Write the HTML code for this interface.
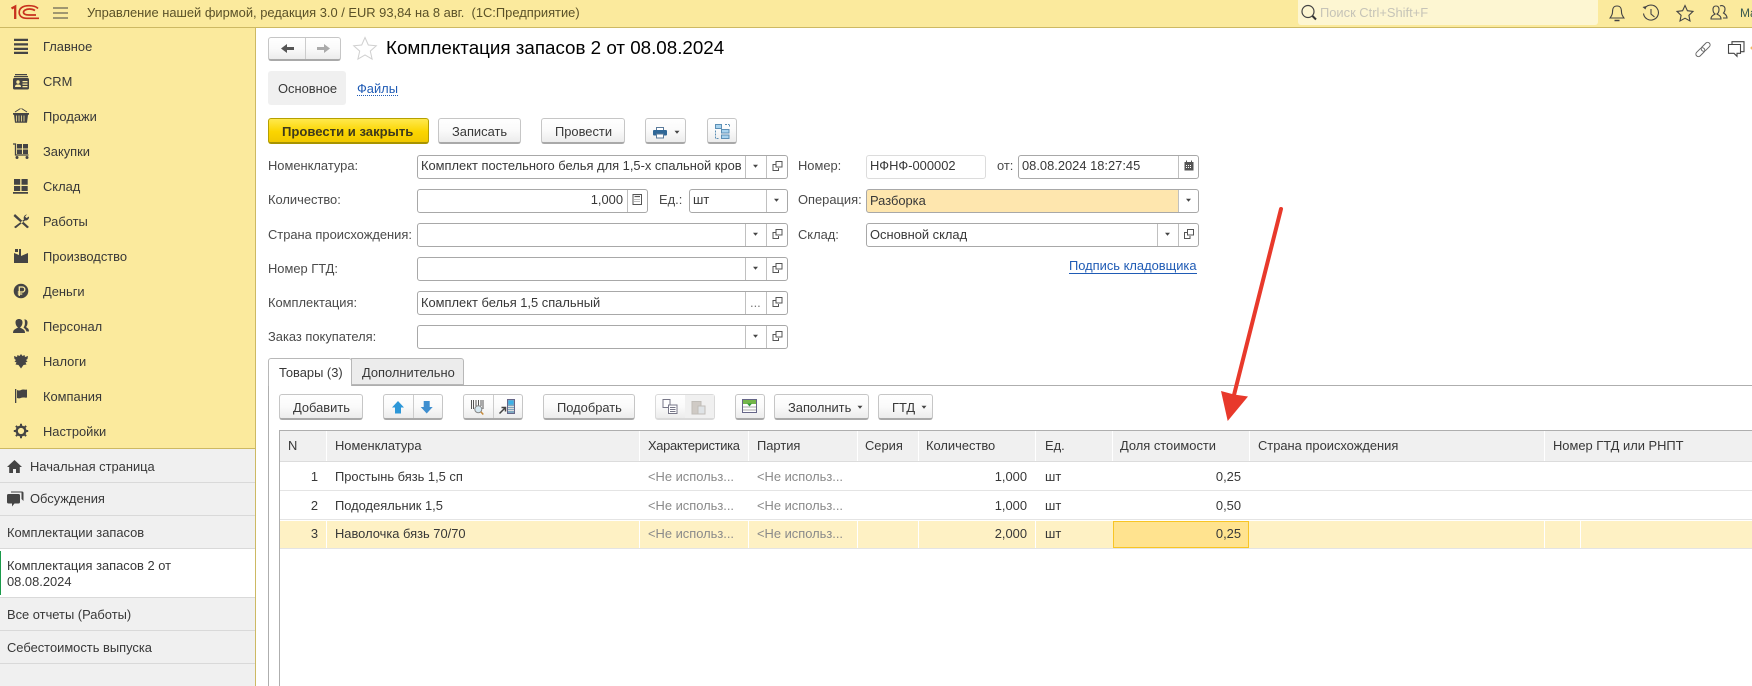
<!DOCTYPE html>
<html lang="ru"><head><meta charset="utf-8"><title>Комплектация запасов 2 от 08.08.2024</title>
<style>
html,body{margin:0;padding:0;background:#fff}
body{position:relative;width:1752px;height:686px;overflow:hidden;font-family:"Liberation Sans","Noto Sans CJK SC",sans-serif;font-size:12.9px;color:#383838}
div{box-sizing:border-box}
.r{position:absolute}
.t{position:absolute;white-space:nowrap;line-height:16px;height:16px}
.e{text-align:right}
.b{position:absolute;height:26px;background:linear-gradient(#fff,#fafafa 50%,#ececec);border:1px solid #c6c6c6;border-bottom:2px solid #a9a9a9;border-radius:3px}
.f{position:absolute;height:24px;border:1px solid #a8a8a8;border-radius:3px;background:#fff}
.d{position:absolute;width:1px;background:#c0c0c0}
.l{color:#4a4a4a}
.g{color:#8a8a8a}
</style></head><body>
<div class="r" style="left:0;top:0;width:1752px;height:28px;background:#fbea9d;border-bottom:1px solid #cdb963"></div>
<div class="t" style="left:87px;top:5px;color:#5a5128">Управление нашей фирмой, редакция 3.0 / EUR 93,84 на 8 авг.&nbsp; (1С:Предприятие)</div>
<div class="r" style="left:1298px;top:0;width:300px;height:25px;background:#fdf6d2;border-radius:0 0 3px 3px"></div>
<div class="t" style="left:1320px;top:5px;color:#c6c4b8">Поиск Ctrl+Shift+F</div>
<div class="t" style="left:1740px;top:5px;color:#3a5a50;font-size:12px">Ma</div>

<div class="r" style="left:0;top:28px;width:256px;height:658px;background:#f0f0f0;border-right:1px solid #cdb963"></div>
<div class="r" style="left:0;top:28px;width:255px;height:421px;background:#fbea9d;border-bottom:1px solid #cdb963"></div>
<div class="t" style="left:43px;top:39px">Главное</div>
<div class="t" style="left:43px;top:74px">CRM</div>
<div class="t" style="left:43px;top:109px">Продажи</div>
<div class="t" style="left:43px;top:144px">Закупки</div>
<div class="t" style="left:43px;top:179px">Склад</div>
<div class="t" style="left:43px;top:214px">Работы</div>
<div class="t" style="left:43px;top:249px">Производство</div>
<div class="t" style="left:43px;top:284px">Деньги</div>
<div class="t" style="left:43px;top:319px">Персонал</div>
<div class="t" style="left:43px;top:354px">Налоги</div>
<div class="t" style="left:43px;top:389px">Компания</div>
<div class="t" style="left:43px;top:424px">Настройки</div>

<div class="r" style="left:0;top:482px;width:255px;height:1px;background:#d9d9d9"></div>
<div class="r" style="left:0;top:515px;width:255px;height:1px;background:#d9d9d9"></div>
<div class="r" style="left:0;top:548px;width:255px;height:50px;background:#fff;border-top:1px solid #d9d9d9;border-bottom:1px solid #d9d9d9"></div>
<div class="r" style="left:0;top:551px;width:1px;height:44px;background:#1a9a4a"></div>
<div class="r" style="left:0;top:630px;width:255px;height:1px;background:#d9d9d9"></div>
<div class="r" style="left:0;top:663px;width:255px;height:1px;background:#d9d9d9"></div>
<div class="t" style="left:30px;top:459px">Начальная страница</div>
<div class="t" style="left:30px;top:491px">Обсуждения</div>
<div class="t" style="left:7px;top:525px">Комплектации запасов</div>
<div class="t" style="left:7px;top:558px">Комплектация запасов 2 от</div>
<div class="t" style="left:7px;top:574px">08.08.2024</div>
<div class="t" style="left:7px;top:607px">Все отчеты (Работы)</div>
<div class="t" style="left:7px;top:640px">Себестоимость выпуска</div>

<div class="b" style="left:268px;top:37px;width:73px;height:24px"></div>
<div class="d" style="left:305px;top:38px;height:21px;background:#ccc"></div>
<div class="t" style="left:386px;top:38px;font-size:18.8px;line-height:20px;height:20px;color:#000">Комплектация запасов 2 от 08.08.2024</div>

<div class="r" style="left:268px;top:71px;width:78px;height:34px;background:#f0f0f0;border-radius:3px"></div>
<div class="t" style="left:278px;top:81px">Основное</div>
<div class="t" style="left:357px;top:81px;color:#1f5bb5;border-bottom:1px dotted #1f5bb5;height:15px">Файлы</div>

<div class="r" style="left:268px;top:118px;width:161px;height:26px;border:1px solid #b5a000;border-bottom:2px solid #a89400;border-radius:3px;background:linear-gradient(#ffe94d,#fbd500 55%,#f1c800)"></div>
<div class="t" style="left:282px;top:124px;font-weight:bold;font-size:13.1px;color:#3e3a1c">Провести и закрыть</div>
<div class="b" style="left:438px;top:118px;width:83px"></div>
<div class="t" style="left:452px;top:124px">Записать</div>
<div class="b" style="left:541px;top:118px;width:84px"></div>
<div class="t" style="left:555px;top:124px">Провести</div>
<div class="b" style="left:645px;top:118px;width:41px"></div>
<div class="b" style="left:707px;top:118px;width:30px"></div>

<div class="t l" style="left:268px;top:158px">Номенклатура:</div>
<div class="t l" style="left:268px;top:192px">Количество:</div>
<div class="t l" style="left:268px;top:227px">Страна происхождения:</div>
<div class="t l" style="left:268px;top:261px">Номер ГТД:</div>
<div class="t l" style="left:268px;top:295px">Комплектация:</div>
<div class="t l" style="left:268px;top:329px">Заказ покупателя:</div>

<div class="f" style="left:417px;top:155px;width:371px"></div>
<div class="f" style="left:417px;top:189px;width:231px"></div>
<div class="f" style="left:689px;top:189px;width:99px"></div>
<div class="f" style="left:417px;top:223px;width:371px"></div>
<div class="f" style="left:417px;top:257px;width:371px"></div>
<div class="f" style="left:417px;top:291px;width:371px"></div>
<div class="f" style="left:417px;top:325px;width:371px"></div>
<div class="d" style="left:745px;top:156px;height:22px"></div><div class="d" style="left:766px;top:156px;height:22px"></div>
<div class="d" style="left:627px;top:190px;height:22px"></div><div class="d" style="left:766px;top:190px;height:22px"></div>
<div class="d" style="left:745px;top:224px;height:22px"></div><div class="d" style="left:766px;top:224px;height:22px"></div>
<div class="d" style="left:745px;top:258px;height:22px"></div><div class="d" style="left:766px;top:258px;height:22px"></div>
<div class="d" style="left:745px;top:292px;height:22px"></div><div class="d" style="left:766px;top:292px;height:22px"></div>
<div class="d" style="left:745px;top:326px;height:22px"></div><div class="d" style="left:766px;top:326px;height:22px"></div>
<div class="t" style="left:421px;top:158px;width:323px;overflow:hidden">Комплект постельного белья для 1,5-х спальной кров</div>
<div class="t e" style="left:560px;top:192px;width:63px">1,000</div>
<div class="t l" style="left:659px;top:192px">Ед.:</div>
<div class="t" style="left:693px;top:192px">шт</div>
<div class="t" style="left:421px;top:295px">Комплект белья 1,5 спальный</div>
<div class="t" style="left:750px;top:295px;color:#777">...</div>

<div class="t l" style="left:798px;top:158px">Номер:</div>
<div class="t l" style="left:798px;top:192px">Операция:</div>
<div class="t l" style="left:798px;top:227px">Склад:</div>
<div class="f" style="left:866px;top:155px;width:120px;border-color:#dcdcdc"></div>
<div class="t" style="left:870px;top:158px">НФНФ-000002</div>
<div class="t l" style="left:997px;top:158px">от:</div>
<div class="f" style="left:1018px;top:155px;width:181px"></div>
<div class="d" style="left:1178px;top:156px;height:22px"></div>
<div class="t" style="left:1022px;top:158px">08.08.2024 18:27:45</div>
<div class="f" style="left:866px;top:189px;width:333px;background:linear-gradient(to right,#fee6ae 312px,#fff 312px)"></div>
<div class="d" style="left:1178px;top:190px;height:22px"></div>
<div class="t" style="left:870px;top:193px">Разборка</div>
<div class="f" style="left:866px;top:223px;width:333px"></div>
<div class="d" style="left:1157px;top:224px;height:22px"></div><div class="d" style="left:1178px;top:224px;height:22px"></div>
<div class="t" style="left:870px;top:227px">Основной склад</div>
<div class="t" style="left:1069px;top:258px;color:#1f5bb5;border-bottom:1px solid #1f5bb5;height:16px">Подпись кладовщика</div>

<div class="r" style="left:268px;top:385px;width:1484px;height:301px;border-left:1px solid #aeaeae;border-top:1px solid #aeaeae"></div>
<div class="r" style="left:351px;top:358px;width:113px;height:27px;background:#ececec;border:1px solid #b8b8b8;border-radius:0 3px 0 0"></div>
<div class="r" style="left:268px;top:358px;width:84px;height:28px;background:#fff;border:1px solid #b8b8b8;border-bottom:0;border-radius:3px 3px 0 0"></div>
<div class="t" style="left:279px;top:365px">Товары (3)</div>
<div class="t" style="left:362px;top:365px">Дополнительно</div>

<div class="b" style="left:279px;top:394px;width:84px"></div><div class="t" style="left:293px;top:400px">Добавить</div>
<div class="b" style="left:383px;top:394px;width:60px"></div><div class="d" style="left:413px;top:395px;height:23px;background:#ccc"></div>
<div class="b" style="left:463px;top:394px;width:60px"></div><div class="d" style="left:493px;top:395px;height:23px;background:#ccc"></div>
<div class="b" style="left:543px;top:394px;width:92px"></div><div class="t" style="left:557px;top:400px">Подобрать</div>
<div class="b" style="left:655px;top:394px;width:60px;border-color:#dadada"></div><div class="r" style="left:685px;top:395px;width:29px;height:23px;background:#f0f0f0"></div>
<div class="b" style="left:735px;top:394px;width:30px"></div>
<div class="b" style="left:774px;top:394px;width:95px"></div><div class="t" style="left:788px;top:400px">Заполнить</div>
<div class="b" style="left:878px;top:394px;width:55px"></div><div class="t" style="left:892px;top:400px">ГТД</div>

<div class="r" style="left:279px;top:430px;width:1473px;height:256px;border-left:1px solid #aeaeae;border-top:1px solid #aeaeae"></div>
<div class="r" style="left:280px;top:431px;width:1472px;height:31px;background:#f0f0f0;border-bottom:1px solid #dcdcdc"></div>
<div class="r" style="left:280px;top:490px;width:1472px;height:1px;background:#e4e4e4"></div>
<div class="r" style="left:280px;top:519px;width:1472px;height:1px;background:#e4e4e4"></div>
<div class="r" style="left:280px;top:521px;width:1472px;height:27px;background:#fef1c4"></div>
<div class="r" style="left:280px;top:548px;width:1472px;height:1px;background:#e4e4e4"></div>
<div class="d" style="left:326px;top:431px;height:30px;background:#fff"></div>
<div class="d" style="left:639px;top:431px;height:30px;background:#fff"></div>
<div class="d" style="left:748px;top:431px;height:30px;background:#fff"></div>
<div class="d" style="left:857px;top:431px;height:30px;background:#fff"></div>
<div class="d" style="left:918px;top:431px;height:30px;background:#fff"></div>
<div class="d" style="left:1035px;top:431px;height:30px;background:#fff"></div>
<div class="d" style="left:1112px;top:431px;height:30px;background:#fff"></div>
<div class="d" style="left:1249px;top:431px;height:30px;background:#fff"></div>
<div class="d" style="left:1544px;top:431px;height:30px;background:#fff"></div>
<div class="d" style="left:326px;top:521px;height:27px;background:#fff"></div>
<div class="d" style="left:639px;top:521px;height:27px;background:#fff"></div>
<div class="d" style="left:748px;top:521px;height:27px;background:#fff"></div>
<div class="d" style="left:857px;top:521px;height:27px;background:#fff"></div>
<div class="d" style="left:918px;top:521px;height:27px;background:#fff"></div>
<div class="d" style="left:1035px;top:521px;height:27px;background:#fff"></div>
<div class="d" style="left:1544px;top:521px;height:27px;background:#fff"></div>
<div class="d" style="left:1580px;top:521px;height:27px;background:#fff"></div>
<div class="r" style="left:1113px;top:521px;width:136px;height:27px;background:#ffe38f;border:1px solid #f8c525"></div>

<div class="t" style="left:288px;top:438px">N</div>
<div class="t" style="left:335px;top:438px">Номенклатура</div>
<div class="t" style="left:648px;top:438px;letter-spacing:-.3px">Характеристика</div>
<div class="t" style="left:757px;top:438px">Партия</div>
<div class="t" style="left:865px;top:438px">Серия</div>
<div class="t" style="left:926px;top:438px">Количество</div>
<div class="t" style="left:1045px;top:438px">Ед.</div>
<div class="t" style="left:1120px;top:438px">Доля стоимости</div>
<div class="t" style="left:1258px;top:438px">Страна происхождения</div>
<div class="t" style="left:1553px;top:438px">Номер ГТД или РНПТ</div>

<div class="t e" style="left:290px;top:469px;width:28px">1</div>
<div class="t" style="left:335px;top:469px">Простынь бязь 1,5 сп</div>
<div class="t g" style="left:648px;top:469px">&lt;Не использ...</div>
<div class="t g" style="left:757px;top:469px">&lt;Не использ...</div>
<div class="t e" style="left:960px;top:469px;width:67px">1,000</div>
<div class="t" style="left:1045px;top:469px">шт</div>
<div class="t e" style="left:1180px;top:469px;width:61px">0,25</div>

<div class="t e" style="left:290px;top:498px;width:28px">2</div>
<div class="t" style="left:335px;top:498px">Пододеяльник 1,5</div>
<div class="t g" style="left:648px;top:498px">&lt;Не использ...</div>
<div class="t g" style="left:757px;top:498px">&lt;Не использ...</div>
<div class="t e" style="left:960px;top:498px;width:67px">1,000</div>
<div class="t" style="left:1045px;top:498px">шт</div>
<div class="t e" style="left:1180px;top:498px;width:61px">0,50</div>

<div class="t e" style="left:290px;top:526px;width:28px">3</div>
<div class="t" style="left:335px;top:526px">Наволочка бязь 70/70</div>
<div class="t g" style="left:648px;top:526px">&lt;Не использ...</div>
<div class="t g" style="left:757px;top:526px">&lt;Не использ...</div>
<div class="t e" style="left:960px;top:526px;width:67px">2,000</div>
<div class="t" style="left:1045px;top:526px">шт</div>
<div class="t e" style="left:1180px;top:526px;width:61px">0,25</div>

<svg class="r" style="left:0;top:0" width="1752" height="686" viewBox="0 0 1752 686" xmlns="http://www.w3.org/2000/svg">
<defs>
<path id="dd" d="M-2.500-1.300h5l-2.500 3z" fill="#444"/>
<g id="op" fill="none" stroke="#555" stroke-width="1"><path d="M-1.500-4.500h6v5.500h-6z"/><path d="M-1.500-1.500h-3v6h5.500v-2.500"/></g>
</defs>
<!-- top bar logo -->
<g fill="none" stroke="#c8321e">
<path d="M11.500 8.500L15.200 6.500V19" stroke-width="2.300"/>
<path d="M38 8.500C36 6.300 33 5.700 29 5.700C22.500 5.700 19.200 8.500 19.200 12.300C19.200 16.300 22.500 18.300 27 18.300H39" stroke-width="1.700"/>
<path d="M35 10.500C33.500 9.600 31.500 9 29.500 9C26 9 23.500 10.500 23.500 12.300C23.500 14.200 26 15 29 15H36" stroke-width="1.700"/>
</g>
<path d="M53 8h15M53 13h15M53 18h15" stroke="#444" stroke-width="1"/>
<!-- search and top icons -->
<circle cx="1308" cy="11.500" r="6" fill="none" stroke="#444" stroke-width="1.200"/><path d="M1312.500 16l3.500 3.500" stroke="#333" stroke-width="2"/>
<g fill="none" stroke="#444" stroke-width="1.100">
<path d="M1617 6c-4 0-4.500 3-4.500 6 0 3-1.500 4.500-2.500 6h14c-1-1.500-2.500-3-2.500-6 0-3-.5-6-4.500-6z"/><path d="M1614.500 20.500h5" stroke-width="1.500"/>
<path d="M1645 8a7.500 7.500 0 1 1-1.500 5.500"/><path d="M1651 9v5l3.500 3"/>
<path d="M1685 5.500l2.400 5.200 5.600.7-4.100 3.900 1.100 5.700-5-2.800-5 2.800 1.100-5.700-4.100-3.900 5.600-.7z"/>
<path d="M1711 19c0-3 2-3.500 4-5-1.500-1-2-3-2-4.500 0-2 1-3.500 3-3.500s3 1.500 3 3.500c0 1.500-.5 3.500-2 4.500 2 1.500 4 2 4 5z"/><path d="M1720 6c2-1 5 0 5 3 0 1.500-.5 3-1.500 4 1.500 1 3.500 2 3.500 5h-4"/>
</g>
<path d="M1642.500 7l3 2.500 1-3.500z" fill="#444"/>
<!-- nav -->
<path d="M281 48.500l6-4.500v3h7v3h-7v3z" fill="#555"/>
<path d="M330 48.500l-6-4.500v3h-7v3h7v3z" fill="#aaa"/>
<path d="M365 37.500l3.300 7.500 8 .8-6 5.300 1.800 8-7.100-4.200-7.100 4.200 1.800-8-6-5.300 8-.8z" fill="#fff" stroke="#d0d0d0"/>
<!-- header right -->
<g fill="none" stroke="#666" stroke-width="1" transform="rotate(-45 1703 49.500)"><rect x="1694" y="47" width="10.500" height="5" rx="2.500"/><rect x="1701.500" y="47" width="10.500" height="5" rx="2.500"/></g>
<g fill="none" stroke="#444" stroke-width="1.100"><path d="M1732 44v-2.300h12v10h-3.500"/><path d="M1728.500 44.500h12v8.800h-3.500v3l-3-3h-5.500z"/></g>
<circle cx="1752" cy="48" r="1.500" fill="#f2b860"/>
<!-- sidebar icons -->
<g fill="#444">
<path d="M14 39h14v2.300H14zM14 43.500h14v2.300H14zM14 48h14v2.300H14zM14 52h14v2.300H14z" transform="translate(0 -.3)"/>
<path d="M15 74h12v1.200H15zM14 76h14v1.200H14z"/><rect x="13" y="78" width="16" height="11.500" rx="1.500"/>
<g fill="#fbea9d"><circle cx="18" cy="82" r="1.700"/><path d="M15 87c0-2 1-2.500 3-2.500s3 .5 3 2.500zM22.500 81h5v1.200h-5zM22.500 83.500h5v1.200h-5zM22.500 86h5v1.200h-5z"/></g>
<path d="M13 113h16v1.800h-1l-1 8H15l-1-8h-1z"/><path d="M15 112l5.500-3.500M27 112l-5.500-3.500" stroke="#444" fill="none"/>
<path d="M16.500 115.500v6M19 115.500v6M21.500 115.500v6M24 115.500v6" stroke="#fbea9d" stroke-width=".8"/>
<path d="M17 144h5v4.500h-5zM23 144h5v4.500h-5zM17 149.500h5v4.500h-5zM23 149.500h5v4.500h-5z"/><path d="M13 144h2.500v11h13" fill="none" stroke="#444" stroke-width="1.300"/><circle cx="17" cy="157.500" r="1.500"/><circle cx="27" cy="157.500" r="1.500"/>
<path d="M14 179h6.200v5.700H14zM21.500 179h6.200v5.700h-6.200zM14 186h6.200v5H14zM21.500 186h6.200v5h-6.200zM13 192h15v1.800H13z"/>
<path d="M15 214l14 13-1.800 1.300L13.500 216zM27 214.500a3.500 3.500 0 0 0-3 5l-10 7.500 1.700 1.300 9.300-7.800a3.500 3.500 0 0 0 4-4l-2.500 1.500-1.500-1.500z"/>
<path d="M14 263v-10l5 2v-6h2v7l7-3v10z"/><path d="M15 249h3v3h-3z"/>
<circle cx="21" cy="291" r="7.300"/><path d="M19.300 296v-9h3a2.300 2.300 0 0 1 0 5h-4.500M17.800 294h4.500" fill="none" stroke="#fbea9d" stroke-width="1.300"/>
<path d="M13 333c0-4 3-4 5-5.500-1.500-1-2.500-3-2.500-5 0-2.500 1.500-3.500 3.500-3.500s3.500 1 3.500 3.500c0 2-1 4-2.500 5 2 1.500 5 1.500 5 5.500z"/><path d="M23.500 319.500c2-.5 4 .5 4 3 0 2-.5 3.500-1.500 4.500 1 1 3 1 3 4.500h-2.500c-.5-2-2-3-3-4 1-1.500 2-3 1-8z"/>
<path d="M21 354l1.500 2 2-1 .5 2 3-1-.5 3-1.500 1 1.500 1.500-2 1 1 2-3 .5-2.500 3.500-2.500-3.500-3-.5 1-2-2-1 1.500-1.500-1.500-1-.5-3 3 1 .5-2 2 1z"/>
<path d="M15 389h1.300v14H15zM17 390c3 1.500 4-.5 6-.5s3 .5 4 0v8c-1 .5-2 0-4 0s-3 1.500-6 .5z"/>
<circle cx="21" cy="431" r="4.300" fill="none" stroke="#444" stroke-width="2.400"/>
<path d="M21 423.800v14.400M13.800 431h14.400M15.900 425.900l10.200 10.200M26.100 425.900l-10.200 10.200" stroke="#444" stroke-width="2" stroke-dasharray="2.500 9.400"/>
<path d="M7 467l7.500-7 7.500 7h-2.200v6h-3.800v-4h-3v4H9.200v-6z"/>
<path d="M11 491.500h11a1.500 1.500 0 0 1 1.500 1.500v8l-2-2v-6.500H11z"/><path d="M8.500 494h10a1.500 1.500 0 0 1 1.500 1.500v6.500a1.500 1.500 0 0 1-1.500 1.500h-4l-2.500 3v-3H8.500A1.500 1.500 0 0 1 7 502v-6.500A1.500 1.500 0 0 1 8.500 494z"/>
</g>
<!-- print, structure -->
<rect x="656.500" y="127.500" width="7" height="4" fill="#fff" stroke="#5a7a9a"/><rect x="653" y="130" width="14" height="5.500" rx="1" fill="#2f6797"/><rect x="656.500" y="134" width="7" height="4" fill="#fff" stroke="#5a7a9a"/>
<use href="#dd" x="677" y="132"/>
<g fill="#a9d3ee" stroke="#5c8fb5"><rect x="715.500" y="124.500" width="6" height="4"/><rect x="721.500" y="129.500" width="7.500" height="3.500"/><rect x="721.500" y="135" width="7.500" height="3.500"/></g>
<path d="M715.500 130.500v8h3.500M729.500 124.500v3M725 124.500h4" stroke="#5c8fb5" fill="none" stroke-dasharray="2 1"/>
<!-- field icons -->
<use href="#dd" x="755.500" y="166"/><use href="#op" x="777.500" y="166"/>
<use href="#dd" x="776.500" y="200"/>
<use href="#dd" x="755.500" y="234"/><use href="#op" x="777.500" y="234"/>
<use href="#dd" x="755.500" y="268"/><use href="#op" x="777.500" y="268"/>
<use href="#op" x="777.500" y="302"/>
<use href="#dd" x="755.500" y="336"/><use href="#op" x="777.500" y="336"/>
<use href="#dd" x="1188.500" y="200"/>
<use href="#dd" x="1167.500" y="234"/><use href="#op" x="1189" y="234"/>
<rect x="633" y="194.500" width="8.500" height="10" fill="none" stroke="#555"/><path d="M634.500 196.500h5.500" stroke="#555" stroke-width="1.200"/><path d="M634.500 199.500h5.500M634.500 201.500h5.500" stroke="#777" stroke-dasharray="1 1"/>
<rect x="1184.500" y="162" width="9" height="8.500" fill="#555"/><path d="M1186.500 160.500v2.500M1191.500 160.500v2.500" stroke="#555"/><path d="M1186 165.500h6M1186 167.500h6" stroke="#fff" stroke-dasharray="1 1"/>
<!-- toolbar icons -->
<path d="M398 401l6 6.500h-3v6h-6v-6h-3z" fill="#2d97d8"/>
<path d="M423.700 401h6v6h3l-6 6.500-6-6.500h3z" fill="#3f8fd0"/>
<path d="M471.500 400v9M473.500 400v9M476 400v9M478.500 400v6M481 400v6M483 400v9" stroke="#555"/><circle cx="478.300" cy="409.300" r="3.500" fill="#d5e7f0" stroke="#888"/><path d="M480.800 411.800l2.500 2.700" stroke="#c58a3a" stroke-width="1.500"/>
<rect x="507.500" y="399.500" width="7" height="14" fill="#7fa8c0" stroke="#668"/><rect x="508.500" y="400.500" width="5" height="4" fill="#3bb1e8"/><path d="M508 406.500h6M508 408.500h6M508 410.500h6" stroke="#ddd"/><path d="M499.500 413.500l5.500-5.500M501.500 407.500h4v4" stroke="#444" stroke-width="1.500" fill="none"/>
<g stroke="#778" fill="#fff"><rect x="663" y="399.500" width="7" height="8"/><rect x="668.500" y="405" width="8.500" height="8.500"/><path d="M670 407.500h5.500M670 409.500h5.500M670 411.500h5.500" fill="none"/></g>
<g stroke="#c0bdb8" fill="#cfcac5"><rect x="692" y="401.500" width="9" height="12.500"/><rect x="698" y="406" width="7" height="8" fill="#dfe3e6"/></g>
<rect x="742.500" y="399.500" width="14" height="13" fill="#fff" stroke="#668"/><rect x="743" y="400" width="13" height="4" fill="#74b64a"/><path d="M743 407h13M743 410h13" stroke="#aaa"/><path d="M747 403.500h5l-2.500 3z" fill="#2f9a3a"/>
<use href="#dd" x="860" y="407"/><use href="#dd" x="924" y="407"/>
<!-- red arrow -->
<path d="M1281 209L1234 395" stroke="#e8392b" stroke-width="4" stroke-linecap="round"/>
<path d="M1221 391L1234 394.500 1248 396.500 1227.700 421z" fill="#e8392b"/>
</svg>
</body></html>
